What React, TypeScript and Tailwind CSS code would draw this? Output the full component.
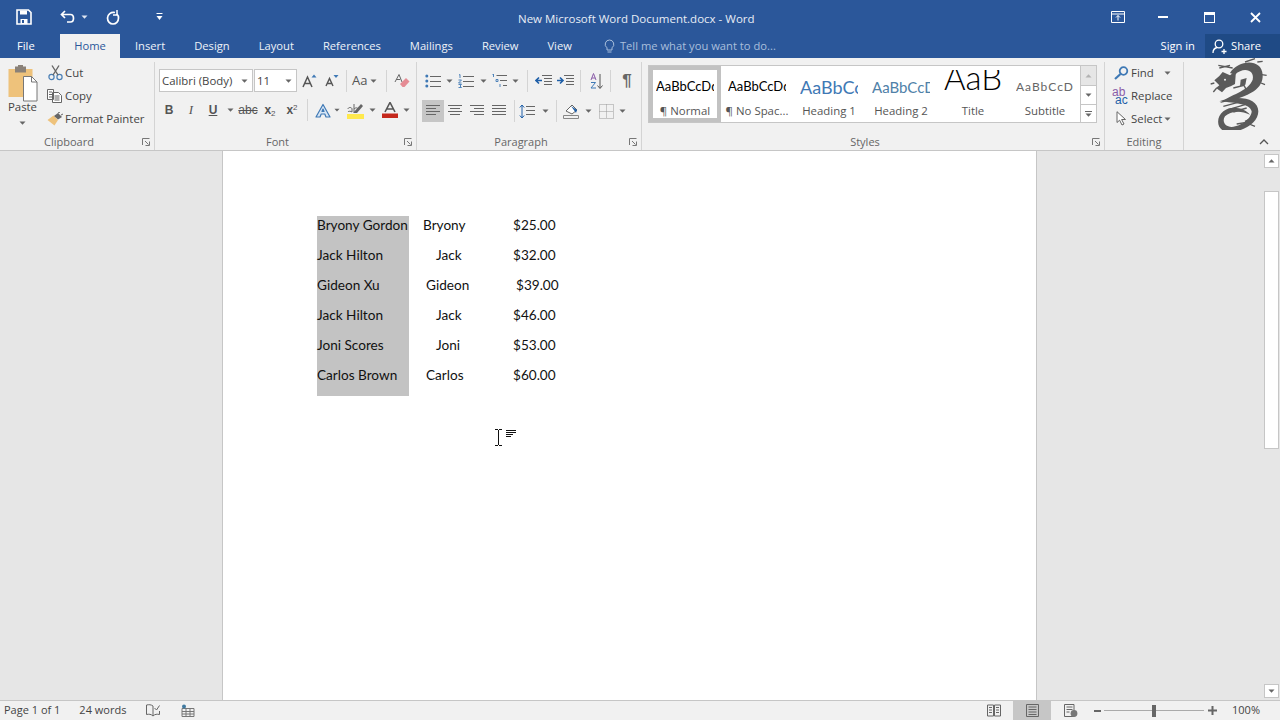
import React from "react";

const blue = "#2b579a";

// small helper so every icon is just a sized svg in ribbon pixels
const Svg = ({ w, h, className, children }: { w: number; h: number; className?: string; children: React.ReactNode }) => (
  <svg width={w} height={h} viewBox={`0 0 ${w} ${h}`} className={className} fill="none">
    {children}
  </svg>
);

const Caret = ({ className = "" }: { className?: string }) => (
  <Svg w={7} h={4} className={className}>
    <path d="M0.5 0.5h6L3.5 3.8z" fill="#666" />
  </Svg>
);

const Launcher = () => (
  <Svg w={8} h={8}>
    <path d="M0.5 7V0.5H7.5M3 3l3.5 3.5M7.5 3.5v4h-4" stroke="#777" strokeWidth="1" />
  </Svg>
);

const VSep = ({ className = "" }: { className?: string }) => <div className={`w-px h-[22px] bg-[#d4d4d4] ${className}`} />;

const Lines = ({ rows }: { rows: number[][] }) => (
  <Svg w={16} h={14}>
    {rows.map((r, i) => (
      <path key={i} d={`M${r[0]} ${r[2] + 0.5}H${r[1]}`} stroke="#666" strokeWidth="1" />
    ))}
  </Svg>
);

const Cell = ({ className, children }: { className: string; children?: React.ReactNode }) => (
  <div className={`h-[22px] flex items-center justify-center shrink-0 ${className}`}>{children}</div>
);

const Group = ({ label, launcher, className, children }: { label: string; launcher?: boolean; className: string; children: React.ReactNode }) => (
  <div className={`flex flex-col shrink-0 h-[88px] mt-[4px] border-r border-[#d4d4d4] ${className}`}>
    <div className="flex-1 min-h-0">{children}</div>
    <div className="h-[16px] flex items-center text-[11px] text-[#666]">
      <div className="flex-1 text-center">{label}</div>
      {launcher && (
        <div className="w-[16px] flex pl-[4px]">
          <Launcher />
        </div>
      )}
    </div>
  </div>
);

const SmallBtn = ({ icon, label, caretClass }: { icon: React.ReactNode; label: string; caretClass?: string }) => (
  <div className="h-[23px] flex items-center">
    <div className="w-[18px] flex justify-center mr-[1px]">{icon}</div>
    <span>{label}</span>
    {caretClass && <Caret className={caretClass} />}
  </div>
);

const Clipboard = () => (
  <Group label="Clipboard" launcher className="w-[155px]">
    <div className="flex pt-[3px]">
      <div className="w-[45px] flex flex-col items-center">
        <Svg w={30} h={37}>
          <rect x="0.5" y="4" width="24" height="28" fill="#eec27b" />
          <rect x="7" y="1.5" width="11" height="6" fill="#8a8178" />
          <rect x="10" y="0" width="5" height="3" fill="#8a8178" />
          <path d="M15.5 11.5h8l5.5 5.5v19h-13.5z" fill="#fff" stroke="#777" />
          <path d="M23.5 11.5v5.5h5.5" stroke="#777" />
        </Svg>
        <div className="-mt-[3px] leading-[16px]">Paste</div>
        <Caret className="mt-[6px]" />
      </div>
      <div className="pl-[1px] -mt-[4px]">
        <SmallBtn
          label="Cut"
          icon={
            <Svg w={15} h={16}>
              <circle cx="3.5" cy="12" r="2.6" stroke="#4a7fb5" strokeWidth="1.2" />
              <circle cx="11.5" cy="12" r="2.6" stroke="#4a7fb5" strokeWidth="1.2" />
              <path d="M5 10L11 0.5M10 10L4 0.5" stroke="#666" strokeWidth="1.4" />
            </Svg>
          }
        />
        <SmallBtn
          label="Copy"
          icon={
            <Svg w={16} h={14}>
              <path d="M0.5 0.5h6v10h-6zM5.5 3.5h6l3 3v7h-9z" fill="#fff" stroke="#666" />
              <path d="M2 3h3M2 5.5h3M2 8h3M7.5 7h5M7.5 9h5M7.5 11h5" stroke="#666" />
            </Svg>
          }
        />
        <SmallBtn
          label="Format Painter"
          icon={
            <Svg w={16} h={14}>
              <path d="M0.5 8L6.5 3.5L11 8L7.5 13.5Z" fill="#eec27b" />
              <path d="M7 4L11 1l4 4-4 2.5z" fill="#666" />
              <path d="M11 1l2-1M14 3l2-1" stroke="#666" />
            </Svg>
          }
        />
      </div>
    </div>
  </Group>
);

const Combo = ({ text, className }: { text: string; className: string }) => (
  <div className={`h-[23px] bg-white border border-[#c6c6c6] flex items-center justify-between pl-[2px] pr-[4px] ${className}`}>
    <span>{text}</span>
    <Caret />
  </div>
);

const Font = () => (
  <Group label="Font" launcher className="w-[262px]">
    <div className="pl-[4px] pt-[7px] flex items-center">
      <Combo text="Calibri (Body)" className="w-[94px]" />
      <Combo text="11" className="w-[43px] ml-[1px]" />
      <Cell className="w-[18px] ml-[3px]">
        <Svg w={15} h={14}>
          <path d="M1 13L5.5 3L10 13M2.8 9.5h5.4" stroke="#555" strokeWidth="1.5" />
          <path d="M9.5 3.5L12 0.5l2.5 3z" fill="#3f79b5" />
        </Svg>
      </Cell>
      <Cell className="w-[18px] ml-[5px]">
        <Svg w={14} h={13}>
          <path d="M1 12L4.5 4.5L8 12M2.4 9.5h4.2" stroke="#555" strokeWidth="1.4" />
          <path d="M8.5 1h5l-2.5 3z" fill="#3f79b5" />
        </Svg>
      </Cell>
      <VSep className="ml-[5px]" />
      <div className="ml-[5px] w-[33px] flex items-center text-[13px] text-[#555]">
        Aa
        <Caret className="ml-[3px]" />
      </div>
      <VSep className="ml-[1px]" />
      <Cell className="w-[16px] ml-[7px]">
        <Svg w={16} h={15}>
          <path d="M1 9L5 1.5L8 9M2.2 6.5h4" stroke="#666" />
          <path d="M6 11l6-6 3.5 3.5-5 5.5h-2z" fill="#e58b94" />
        </Svg>
      </Cell>
    </div>
    <div className="pl-[3px] pt-[7px] flex items-center text-[#555]">
      <Cell className="w-[22px]"><span className="font-bold text-[12px] font-['Liberation_Sans',sans-serif]">B</span></Cell>
      <Cell className="w-[22px]"><span className="italic text-[13px] font-['Liberation_Serif',serif] text-[#555]">I</span></Cell>
      <Cell className="w-[22px]"><span className="underline font-bold text-[12px] font-['Liberation_Sans',sans-serif]">U</span></Cell>
      <Cell className="w-[12px]"><Caret /></Cell>
      <Cell className="w-[22px] ml-px"><span className="line-through text-[12px] font-['Liberation_Sans',sans-serif]">abc</span></Cell>
      <Cell className="w-[22px]">
        <span className="font-bold text-[12px] font-['Liberation_Sans',sans-serif]">x<sub className="text-[8px] font-normal">2</sub></span>
      </Cell>
      <Cell className="w-[22px]">
        <span className="font-bold text-[12px] font-['Liberation_Sans',sans-serif]">x<sup className="text-[8px] font-normal">2</sup></span>
      </Cell>
      <VSep className="ml-[4px]" />
      <Cell className="w-[22px] ml-[4px]">
        <Svg w={16} h={15}>
          <path d="M1 14L8 1.5L15 14H11L9.8 11H6.2L5 14ZM7 8.5h2L8 6Z" fill="#d8e6f5" stroke="#3f79b5" strokeWidth="1.2" strokeLinejoin="round" />
        </Svg>
      </Cell>
      <Cell className="w-[6px]"><Caret /></Cell>
      <Cell className="w-[22px] ml-[4px]">
        <Svg w={17} h={17}>
          <path d="M1 7c0-2 4-2 4 0v3c-1-1-4-1-4 0M7 2v8M7 7c2-2 4-1 4 0" stroke="#666" />
          <path d="M6 11L14 2l2 2-6 7z" fill="#666" />
          <rect y="12" width="17" height="5" fill="#ffe94d" />
        </Svg>
      </Cell>
      <Cell className="w-[12px]"><Caret /></Cell>
      <Cell className="w-[22px] ml-px">
        <Svg w={16} h={16}>
          <path d="M3 10L8 0.5L13 10M4.8 7h6.4" stroke="#555" strokeWidth="1.6" />
          <rect y="11.5" width="16" height="4.5" fill="#c5281c" />
        </Svg>
      </Cell>
      <Cell className="w-[10px]"><Caret /></Cell>
    </div>
  </Group>
);

const Bullets = () => (
  <Svg w={16} h={14}>
    <circle cx="1.8" cy="2" r="1.5" fill="#3f79b5" />
    <circle cx="1.8" cy="7" r="1.5" fill="#3f79b5" />
    <circle cx="1.8" cy="12" r="1.5" fill="#3f79b5" />
    <path d="M5 2.5h11M5 7.5h11M5 12.5h11" stroke="#666" />
  </Svg>
);

const Numbers = () => (
  <Svg w={16} h={14}>
    <path d="M1 1l1-0.5V4M0.5 6h3L0.5 9h3M0.5 10.5h3l-1.5 1.5 1.5 1.5h-3" stroke="#3f79b5" strokeWidth="0.9" />
    <path d="M5 2.5h11M5 7.5h11M5 12.5h11" stroke="#666" />
  </Svg>
);

const Multi = () => (
  <Svg w={16} h={15}>
    <path d="M0.5 2l1-1v3M4 6.5h2v2H4zM8 11v3" stroke="#3f79b5" strokeWidth="0.9" />
    <path d="M4.5 2.5H15M8 7.5h7M11 12.5h4" stroke="#666" />
  </Svg>
);

const Indent = ({ dir }: { dir: "l" | "r" }) => (
  <Svg w={17} h={13}>
    <path d="M7 1.5h10M9 4.5h8M9 7.5h8M9 10.5h8" stroke="#666" />
    <path d={dir === "l" ? "M7 6.5H1.5M4 3.5L1 6.5l3 3" : "M0 6.5h5.5M3 3.5l3 3-3 3"} stroke="#1f5fa8" strokeWidth="1.6" />
  </Svg>
);

const Para = () => (
  <Group label="Paragraph" launcher className="w-[225px]">
    <div className="pl-[7px] pt-[7px] flex items-center h-[30px]">
      <Cell className="w-[18px]"><Bullets /></Cell>
      <Cell className="w-[15px]"><Caret /></Cell>
      <Cell className="w-[18px]"><Numbers /></Cell>
      <Cell className="w-[16px]"><Caret /></Cell>
      <Cell className="w-[18px]"><Multi /></Cell>
      <Cell className="w-[12px]"><Caret /></Cell>
      <VSep className="ml-[6px]" />
      <Cell className="w-[22px] ml-[4px]"><Indent dir="l" /></Cell>
      <Cell className="w-[22px]"><Indent dir="r" /></Cell>
      <VSep className="ml-[4px]" />
      <Cell className="ml-[4px] w-[22px]">
        <Svg w={13} h={16}>
          <path d="M1 7L3.5 0.5 6 7M1.8 5h3.4" stroke="#8a5ca8" />
          <path d="M1 9.5h4.5L1 15h5" stroke="#3f79b5" />
          <path d="M10 1v14M7.5 12.5l2.5 3 2.5-3" stroke="#555" />
        </Svg>
      </Cell>
      <VSep className="ml-[3px]" />
      <Cell className="ml-[5px] w-[22px] text-[17px] font-bold text-[#666] font-['Liberation_Sans',sans-serif]">¶</Cell>
    </div>
    <div className="pl-[5px] pt-[8px] flex items-center">
      <Cell className="w-[22px] bg-[#c6c6c6]"><Lines rows={[[1, 15, 1], [1, 11, 4], [1, 15, 7], [1, 11, 10]]} /></Cell>
      <Cell className="w-[22px]"><Lines rows={[[1, 15, 1], [3, 13, 4], [1, 15, 7], [3, 13, 10]]} /></Cell>
      <Cell className="w-[22px]"><Lines rows={[[1, 15, 1], [5, 15, 4], [1, 15, 7], [5, 15, 10]]} /></Cell>
      <Cell className="w-[22px]"><Lines rows={[[1, 15, 1], [1, 15, 4], [1, 15, 7], [1, 15, 10]]} /></Cell>
      <VSep className="ml-[4px]" />
      <Cell className="w-[18px] ml-[3px]">
        <Svg w={16} h={15}>
          <path d="M3 1v13M0.8 3.5L3 1l2.2 2.5M0.8 11.5L3 14l2.2-2.5" stroke="#1f5fa8" />
          <path d="M7 2.5h9M7 6.5h9M7 10.5h9" stroke="#666" />
        </Svg>
      </Cell>
      <Cell className="w-[18px]"><Caret /></Cell>
      <VSep className="ml-[2px]" />
      <Cell className="w-[22px] ml-[4px]">
        <Svg w={18} h={16}>
          <path d="M3 8l6-6 5 5-5 4z" fill="#fff" stroke="#666" />
          <path d="M8 3l6 4-1 3z" fill="#1f5fa8" />
          <path d="M0.5 12.5h15v3h-15z" stroke="#888" />
        </Svg>
      </Cell>
      <Cell className="w-[10px]"><Caret /></Cell>
      <Cell className="ml-[4px] w-[18px]">
        <Svg w={15} h={15}>
          <path d="M0.5 0.5h14v14h-14zM7.5 0.5v14M0.5 7.5h14" stroke="#999" strokeDasharray="1 1" />
        </Svg>
      </Cell>
      <Cell className="w-[14px]"><Caret /></Cell>
    </div>
  </Group>
);

const StyleItem = ({ sample, name, sampleClass, selected }: { sample: string; name: string; sampleClass: string; selected?: boolean }) => (
  <div className={`w-[72px] h-full flex flex-col items-center shrink-0 overflow-hidden ${selected ? "border-[4px] border-[#c2c2c2]" : "border-[4px] border-transparent"}`}>
    <div className={`h-[36px] w-[58px] overflow-hidden whitespace-nowrap flex ${sampleClass}`}>{sample}</div>
    <div className="h-[14px] leading-[14px] whitespace-nowrap text-[11.4px] text-[#555]">{name}</div>
  </div>
);

const Styles = () => (
  <Group label="Styles" launcher className="w-[463px]">
    <div className="pl-[6px] pt-[3px]">
      <div className="w-[449px] h-[58px] border border-[#c6c6c6] bg-white flex">
        <StyleItem selected sample="AaBbCcDdEe" name="¶ Normal" sampleClass="items-center text-[13px] text-black font-['Lato',sans-serif]" />
        <StyleItem sample="AaBbCcDdEe" name="¶ No Spac..." sampleClass="items-center text-[13px] text-black font-['Lato',sans-serif]" />
        <StyleItem sample="AaBbCcDd" name="Heading 1" sampleClass="items-center text-[18px] text-[#3f79b5] font-['Lato',sans-serif]" />
        <StyleItem sample="AaBbCcDd" name="Heading 2" sampleClass="items-center text-[15px] text-[#4f81a8] font-['Lato',sans-serif]" />
        <StyleItem sample="AaB" name="Title" sampleClass="items-start justify-center text-[33px] leading-[14px] text-black font-light font-['Lato',sans-serif]" />
        <StyleItem sample="AaBbCcDd" name="Subtitle" sampleClass="items-center text-[12px] tracking-[1px] text-[#666] font-['Lato',sans-serif]" />
        <div className="flex-1 flex flex-col border-l border-[#c6c6c6] -ml-[1px]">
          <div className="h-[20px] bg-[#e6e6e6] border-b border-[#c6c6c6] flex items-center justify-center"><Caret className="rotate-180 opacity-40" /></div>
          <div className="h-[19px] border-b border-[#c6c6c6] flex items-center justify-center"><Caret /></div>
          <div className="flex-1 flex flex-col items-center justify-center gap-[1px]">
            <div className="w-[7px] h-px bg-[#666]" />
            <Caret />
          </div>
        </div>
      </div>
    </div>
  </Group>
);

const Editing = () => (
  <Group label="Editing" className="w-[79px]">
    <div className="pl-[7px] -mt-[1px]">
      <SmallBtn
        label="Find"
        caretClass="ml-[10px]"
        icon={
          <Svg w={15} h={14}>
            <circle cx="9.5" cy="5" r="3.8" stroke="#3f79b5" strokeWidth="1.8" />
            <path d="M6.5 8L1 13" stroke="#3f79b5" strokeWidth="2.2" />
          </Svg>
        }
      />
      <div className="h-[23px] flex items-center">
        <div className="w-[18px] mr-[1px] text-[12px] leading-[8px] font-['Liberation_Sans',sans-serif]">
          <div className="text-[#8a5ca8]">ab</div>
          <div className="text-[#1f5fa8] pl-[3px]">ac</div>
        </div>
        <span>Replace</span>
      </div>
      <SmallBtn
        label="Select"
        caretClass="ml-[2px]"
        icon={
          <Svg w={11} h={15}>
            <path d="M1 0.7V11.5L3.6 9.2L6 14L8 13L5.6 8.5H9.5Z" fill="#fff" stroke="#666" />
          </Svg>
        }
      />
    </div>
  </Group>
);

const Dragon = () => (
  <svg width="60" height="72" viewBox="90 10 180 216" fill="#5a5a5a" stroke="#5a5a5a">
    {/* upper body */}
    <path d="M150 55C175 15 245 10 248 60C250 100 215 125 120 145C150 120 205 110 218 75C225 45 190 35 165 60Z" stroke="none" />
    {/* lower coil */}
    <path d="M118 140C175 120 235 130 235 170C235 205 190 232 145 232C110 230 105 190 130 170C155 150 195 160 210 180C180 165 150 170 135 185C125 200 135 217 155 217C185 215 215 190 215 170C210 148 170 145 118 140Z" stroke="none" />
    {/* head */}
    <path d="M103 77L118 64L128 52L150 62L168 48L165 88L152 95L138 100L126 113L108 100L118 92Z" stroke="none" />
    <circle cx="135" cy="75" r="3" fill="#f1f1f1" stroke="none" />
    <path d="M118 40L150 32M115 32L158 40M110 100L100 112M103 85L92 88M195 22L225 12M232 22L248 20M245 60L260 62M243 85L255 90M160 100L192 92L200 108M130 155L185 140M145 165L195 150M160 172L200 160M195 200L228 185M170 208L218 200M225 215L200 205" strokeWidth="4" fill="none" />
    <path d="M182 75L200 70L196 90L180 95Z" stroke="none" />
  </svg>
);

const Ribbon = () => (
  <div className="h-[93px] shrink-0 bg-[#f1f1f1] border-b border-[#c6c6c6] flex text-[11.4px] text-[#444]">
    <Clipboard />
    <Font />
    <Para />
    <Styles />
    <Editing />
    <div className="flex-1 relative flex justify-end pr-[10px]">
      <Dragon />
      {/* collapse chevron sits over the corner of the logo area */}
      <svg width="10" height="6" viewBox="0 0 10 6" className="absolute right-[11px] bottom-[5px]" fill="none">
        <path d="M1 5l4-4 4 4" stroke="#555" strokeWidth="1.3" />
      </svg>
    </div>
  </div>
);

const TitleBar = () => (
  <div className="h-[34px] shrink-0 flex items-center text-white" style={{ backgroundColor: blue }}>
    <div className="w-[16px]" />
    <Svg w={16} h={16}>
      <path d="M1 1h11.5L15 3.5V15H1z" stroke="#fff" strokeWidth="1.6" />
      <path d="M4 1.5h7v4H4zM4.5 10h7v5h-7z" fill="#fff" />
      <rect x="6" y="11" width="2" height="3" fill={blue} />
    </Svg>
    <div className="ml-[28px]">
      <Svg w={16} h={14}>
        <path d="M5 1L1.5 4.5L5 8M2 4.5H10.5C14.5 4.5 14.5 12 10.5 12H7" stroke="#fff" strokeWidth="1.7" />
      </Svg>
    </div>
    <Svg w={7} h={4} className="ml-[5px]">
      <path d="M0.5 0.5h6L3.5 3.8z" fill="#dfe6f1" />
    </Svg>
    <div className="ml-[18px]">
      <Svg w={14} h={15}>
        <path d="M9 2.5C5 1.5 1.5 4.5 1.5 8c0 3.5 2.5 6 5.5 6s5.5-2.5 5.5-6C12.5 6.5 12 5 11 4" stroke="#fff" strokeWidth="1.7" />
        <path d="M11 0v5H7" stroke="#fff" strokeWidth="1.5" />
      </Svg>
    </div>
    <div className="ml-[36px]">
      <Svg w={7} h={8}>
        <path d="M0.5 0.5h6" stroke="#fff" />
        <path d="M0.5 3h6L3.5 7z" fill="#fff" />
      </Svg>
    </div>
    <div className="flex-1 pl-[355px] pt-[3px] text-[11.5px] text-[#e8edf5] whitespace-nowrap">New Microsoft Word Document.docx - Word</div>
    <Svg w={14} h={12}>
      <path d="M0.5 0.5h13v11h-13zM0.5 3h13" stroke="#fff" />
      <path d="M7 9.5V4.5M5 6.5l2-2 2 2" stroke="#fff" />
    </Svg>
    <div className="ml-[33px] w-[10px] h-[2px] bg-white" />
    <div className="ml-[36px] w-[11px] h-[11px] border border-white border-t-[3px]" />
    <div className="ml-[35px] mr-[19px]">
      <Svg w={11} h={11}>
        <path d="M1 1l9 9M10 1l-9 9" stroke="#fff" strokeWidth="1.8" />
      </Svg>
    </div>
  </div>
);

const tabs = ["Insert", "Design", "Layout", "References", "Mailings", "Review", "View"];

const TabBar = () => (
  <div className="h-[24px] shrink-0 flex items-stretch text-[11.2px] text-white" style={{ backgroundColor: blue }}>
    <div className="w-[60px] pl-[17px] leading-[24px]">File</div>
    <div className="w-[60px] bg-[#f1f1f1] text-[#2b579a] text-center leading-[24px]">Home</div>
    <div className="flex pl-[15px] gap-[29px] leading-[24px] text-[#eef2f8]">
      {tabs.map((t) => (
        <span key={t}>{t}</span>
      ))}
    </div>
    <div className="ml-[32px] flex items-center text-[#a9bfdc] whitespace-nowrap">
      <Svg w={11} h={15} className="mr-[5px]">
        <path d="M5.5 1a4.3 4.3 0 0 0-2.5 7.8V11h5V8.8A4.3 4.3 0 0 0 5.5 1zM3.5 13h4" stroke="#a9bfdc" />
      </Svg>
      Tell me what you want to do...
    </div>
    <div className="flex-1" />
    <div className="leading-[24px] mr-[10px]">Sign in</div>
    <div className="w-[75px] bg-[#1f4a85] flex items-center pl-[7px]">
      <Svg w={15} h={15} className="mr-[4px]">
        <circle cx="7" cy="5" r="3.8" stroke="#fff" strokeWidth="1.3" />
        <path d="M1 14c0-3 2-5 4-5.5M9.5 12.5h5M12 10v5" stroke="#fff" strokeWidth="1.3" />
      </Svg>
      Share
    </div>
  </div>
);

type Row = { name: string; first: string; firstPad: string; price: string; pricePad: string };

const rows: Row[] = [
  { name: "Bryony Gordon", first: "Bryony", firstPad: "pl-[14px]", price: "$25.00", pricePad: "pl-[8px]" },
  { name: "Jack Hilton", first: "Jack", firstPad: "pl-[27px]", price: "$32.00", pricePad: "pl-[8px]" },
  { name: "Gideon Xu", first: "Gideon", firstPad: "pl-[17px]", price: "$39.00", pricePad: "pl-[11px]" },
  { name: "Jack Hilton", first: "Jack", firstPad: "pl-[27px]", price: "$46.00", pricePad: "pl-[8px]" },
  { name: "Joni Scores", first: "Joni", firstPad: "pl-[27px]", price: "$53.00", pricePad: "pl-[8px]" },
  { name: "Carlos Brown", first: "Carlos", firstPad: "pl-[17px]", price: "$60.00", pricePad: "pl-[8px]" },
];

const Page = () => (
  <div className="w-[815px] shrink-0 bg-white border-x border-[#c6c6c6] relative pl-[94px] pt-[65px] font-['Lato',sans-serif] text-[13.6px] text-[#111]">
    {rows.map((r, i) => (
      <div key={i} className="grid grid-cols-[92px_96px_80px] h-[30px]">
        <div className="bg-[#c3c3c3] leading-[18px] whitespace-nowrap">{r.name}</div>
        <div className={`leading-[18px] ${r.firstPad}`}>{r.first}</div>
        <div className={`leading-[18px] ${r.pricePad}`}>{r.price}</div>
      </div>
    ))}
    {/* mouse pointer with the click and type hint */}
    <svg width="23" height="17" viewBox="0 0 23 17" className="absolute left-[272px] top-[278px]" fill="none">
      <path d="M0 0.5h3M4 0.5h3M3.5 1v15M0 16.5h3M4 16.5h3" stroke="#111" />
      <path d="M11 1.5h10M11 3.5h10M11 5.5h7M11 7.5h5" stroke="#111" />
    </svg>
  </div>
);

const ScrollBtn = ({ down }: { down?: boolean }) => (
  <div className="h-[14px] w-[15px] bg-white border border-[#c6c6c6] flex items-center justify-center">
    <Caret className={down ? "" : "rotate-180"} />
  </div>
);

const Scrollbar = () => (
  <div className="w-[18px] shrink-0 flex flex-col items-center pt-[3px] pb-[2px]">
    <ScrollBtn />
    <div className="h-[258px] w-[15px] bg-white border border-[#c6c6c6] mt-[23px]" />
    <div className="flex-1" />
    <ScrollBtn down />
  </div>
);

const StatusBar = () => (
  <div className="h-[20px] shrink-0 bg-[#f1f1f1] border-t border-[#c6c6c6] flex items-center text-[11px] text-[#444]">
    <span className="ml-[4px]">Page 1 of 1</span>
    <span className="ml-[19px]">24 words</span>
    <Svg w={14} h={13} className="ml-[20px]">
      <path d="M7 2C5 0.5 3 0.5 0.5 1v9.5C3 10 5 10 7 12c2-2 4-2 6.5-1.5V7M7 2v10" stroke="#666" />
      <path d="M8.5 4l2 2 3-4.5" stroke="#666" />
    </Svg>
    <Svg w={14} h={13} className="ml-[21px]">
      <path d="M1 4.5h12v8H1zM1 7.5h12M1 10h12M5 4.5v8M9 4.5v8" stroke="#777" />
      <circle cx="3" cy="2.5" r="2" fill="#3f79a0" />
    </Svg>
    <div className="flex-1" />
    <Svg w={14} h={13}>
      <path d="M0.5 1h6v11h-6zM7.5 1h6v11h-6zM2 3.5h3M2 6h3M2 8.5h3M9 3.5h3M9 6h3M9 8.5h3" stroke="#666" />
    </Svg>
    <div className="w-[38px] h-[19px] bg-[#c6c6c6] ml-[12px] flex items-center justify-center">
      <Svg w={13} h={13}>
        <path d="M0.5 0.5h12v12h-12zM2.5 3h8M2.5 5.5h8M2.5 8h8M2.5 10.5h8" stroke="#666" />
      </Svg>
    </div>
    <Svg w={14} h={13} className="ml-[13px]">
      <path d="M0.5 0.5h9.5v12H0.5zM2.5 3h6M2.5 5.5h6M2.5 8h3" stroke="#666" />
      <circle cx="10" cy="9.5" r="3.4" fill="#777" />
    </Svg>
    <div className="ml-[16px] w-[7px] h-[2px] bg-[#666]" />
    <div className="ml-[3px] w-[100px] h-px bg-[#aaa] flex items-center justify-center">
      <div className="w-[4px] h-[12px] bg-[#666]" />
    </div>
    <Svg w={9} h={9} className="ml-[4px]">
      <path d="M4.5 0v9M0 4.5h9" stroke="#666" strokeWidth="2" />
    </Svg>
    <span className="ml-[15px] mr-[20px]">100%</span>
  </div>
);

export default function App() {
  return (
    <div className="w-[1280px] h-[720px] overflow-hidden flex flex-col bg-[#e6e6e6] font-['Open_Sans',sans-serif]">
      <TitleBar />
      <TabBar />
      <Ribbon />
      <div className="flex-1 min-h-0 flex">
        <div className="w-[222px] shrink-0" />
        <Page />
        <div className="flex-1" />
        <Scrollbar />
      </div>
      <StatusBar />
    </div>
  );
}
